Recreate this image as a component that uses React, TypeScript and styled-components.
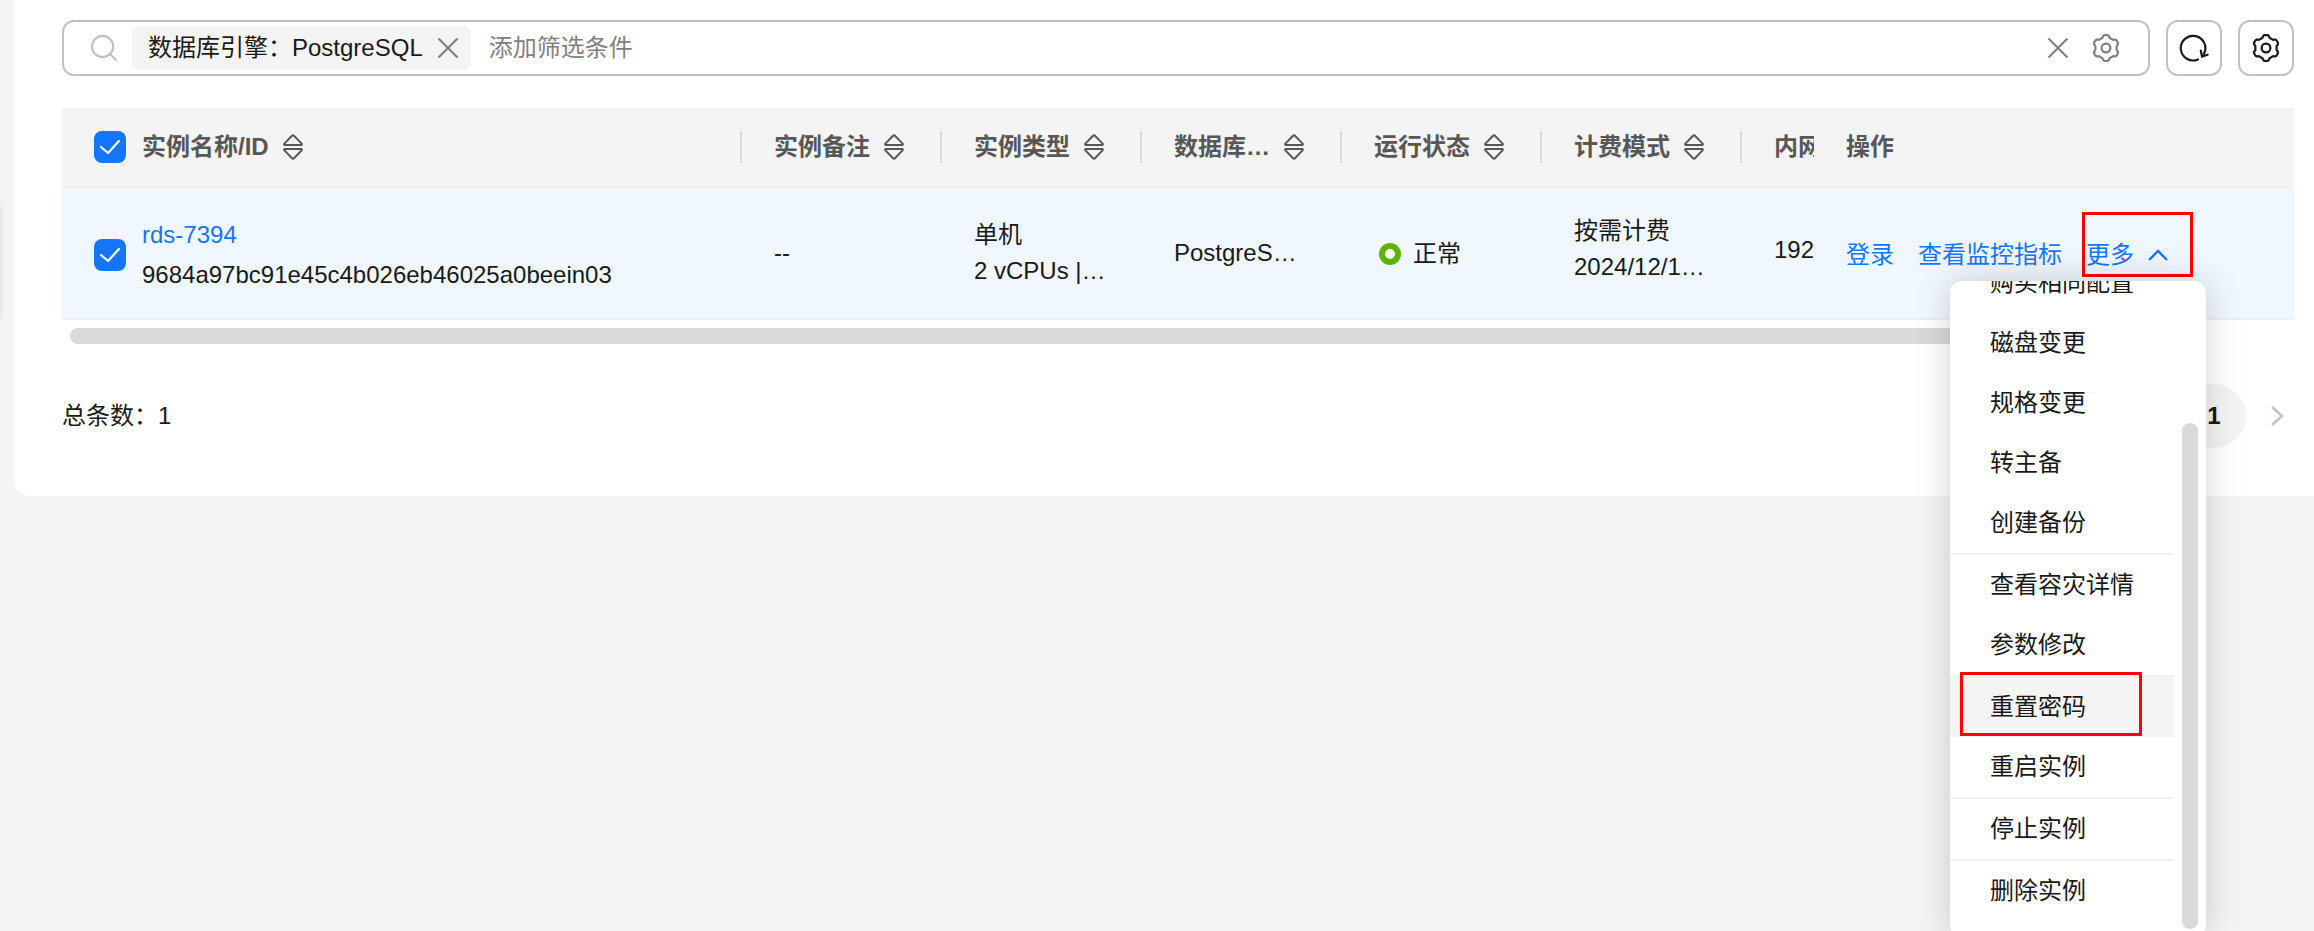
import React from "react";
import styled, { createGlobalStyle, css } from "styled-components";

const color = {
  page: "#f4f4f4",
  panel: "#ffffff",
  text: "#191919",
  heading: "#575757",
  muted: "#808080",
  line: "#c2c2c2",
  divider: "#dbdbdb",
  rowLine: "#f0f0f0",
  selected: "#f0f7ff",
  blue: "#1476ff",
  green: "#5cb300",
  mark: "#ff0000",
};

const GlobalStyle = createGlobalStyle`
  *, *::before, *::after { box-sizing: border-box; }
  body {
    margin: 0;
    background: ${color.page};
    color: ${color.text};
    font: 24px/36px "Liberation Sans", "Noto Sans CJK SC", sans-serif;
  }
  button, input { font: inherit; color: inherit; }
  button { padding: 0; border: 0; background: none; cursor: pointer; }
`;

const Page = styled.div`
  position: relative;
  min-height: 100vh;
  padding-left: 14px;
  overflow: hidden;
`;

const SideHandle = styled.div`
  position: absolute;
  top: 200px;
  left: -20px;
  width: 20px;
  height: 124px;
  border-radius: 0 12px 12px 0;
  box-shadow: 0 0 6px rgba(0, 0, 0, 0.14);
`;

const Panel = styled.main`
  padding: 20px 20px 48px 48px;
  background: ${color.panel};
  border-bottom-left-radius: 16px;
`;

const Toolbar = styled.div`
  display: flex;
  gap: 16px;
  height: 56px;
  margin-bottom: 32px;
`;

const outlined = css`
  border: 2px solid ${color.line};
  border-radius: 12px;
`;

const FilterBox = styled.div`
  ${outlined}
  flex: 1;
  display: flex;
  align-items: center;
  min-width: 0;
  padding: 0 28px 0 26px;
`;

const FilterTag = styled.span`
  display: flex;
  align-items: center;
  gap: 14px;
  height: 44px;
  margin: 0 18px 0 14px;
  padding: 0 12px 0 16px;
  border-radius: 8px;
  background: ${color.page};
  white-space: nowrap;
`;

const FilterInput = styled.input`
  flex: 1;
  min-width: 0;
  height: 40px;
  padding: 0;
  border: 0;
  outline: 0;
  background: none;
  &::placeholder { color: ${color.muted}; opacity: 1; }
`;

const IconButton = styled.button<{ $gap?: number }>`
  display: flex;
  margin-left: ${(p) => p.$gap ?? 0}px;
  color: ${color.muted};
`;

const SquareButton = styled.button`
  && { ${outlined} }
  display: flex;
  align-items: center;
  justify-content: center;
  width: 56px;
`;

const Table = styled.table`
  width: 100%;
  border-collapse: separate;
  border-spacing: 0;
  table-layout: fixed;
`;

const Col = styled.col<{ $width?: number }>`
  width: ${(p) => (p.$width ? `${p.$width}px` : "auto")};
`;

const HeadCell = styled.th<{ $divided?: boolean }>`
  height: 80px;
  padding: 0 0 0 32px;
  border-bottom: 2px solid ${color.rowLine};
  background: linear-gradient(${color.divider}, ${color.divider}) right center /
    ${(p) => (p.$divided ? "2px 32px" : "0 0")} no-repeat ${color.page};
  color: ${color.heading};
  text-align: left;
`;

const Cell = styled.td<{ $low?: boolean }>`
  height: 132px;
  padding: ${(p) => (p.$low ? 4 : 0)}px 0 0 32px;
  border-bottom: 2px solid ${color.rowLine};
  background: ${color.selected};
`;

const HeadLabel = styled.div`
  display: flex;
  align-items: center;
  gap: 14px;
  overflow: hidden;
  white-space: nowrap;
`;

const NameRow = styled.div`
  display: flex;
  align-items: center;
  gap: 16px;
`;

const Lines = styled.div<{ $line?: number; $lift?: number }>`
  display: flex;
  flex-direction: column;
  overflow: hidden;
  padding-bottom: ${(p) => p.$lift ?? 0}px;
  line-height: ${(p) => p.$line ?? 36}px;
  white-space: nowrap;
`;

const Status = styled.div`
  display: flex;
  align-items: center;
  gap: 12px;
  padding: 2px 0 0 5px;
`;

const StatusRing = styled.span`
  width: 22px;
  height: 22px;
  border: 6px solid ${color.green};
  border-radius: 50%;
  background: ${color.panel};
`;

const Link = styled.a`
  color: ${color.blue};
  text-decoration: none;
`;

const CheckLabel = styled.label`
  display: grid;
  flex: none;
  width: 32px;
  height: 32px;
  & > * { grid-area: 1 / 1; }
  svg { pointer-events: none; z-index: 1; }
`;

const CheckInput = styled.input`
  appearance: none;
  width: 32px;
  height: 32px;
  margin: 0;
  border-radius: 8px;
  background: ${color.blue};
`;

const Actions = styled.div`
  display: flex;
  gap: 24px;
  white-space: nowrap;
`;

const MoreWrap = styled.div`
  position: relative;
`;

const MoreButton = styled.button`
  && { color: ${color.blue}; }
  display: flex;
  align-items: center;
  gap: 14px;
  &::after {
    content: "";
    position: absolute;
    inset: -25px -25px -4px -4px;
    border: 3px solid ${color.mark};
  }
`;

const Menu = styled.div`
  position: absolute;
  z-index: 2;
  top: 44px;
  right: -38px;
  display: flex;
  gap: 8px;
  width: 256px;
  height: 656px;
  padding: 0 8px 8px 0;
  border-radius: 12px;
  background: ${color.panel};
  box-shadow: 0 0 36px rgba(0, 0, 0, 0.18);
`;

const MenuList = styled.ul`
  flex: 1;
  display: flex;
  flex-direction: column;
  justify-content: flex-end;
  margin: 0;
  padding: 0 0 8px;
  overflow: hidden;
  list-style: none;
`;

const MenuItem = styled.li<{ $split?: boolean; $active?: boolean }>`
  position: relative;
  flex: none;
  border-top: ${(p) => (p.$split ? `2px solid ${color.rowLine}` : "0")};
  background: ${(p) => (p.$active ? color.page : "transparent")};
  ${(p) =>
    p.$active &&
    css`
      &::after {
        content: "";
        position: absolute;
        inset: -5px 32px 1px 10px;
        border: 3px solid ${color.mark};
        pointer-events: none;
      }
    `}
`;

const MenuButton = styled.button`
  display: block;
  width: 100%;
  height: 60px;
  && { padding-left: 40px; }
  text-align: left;
`;

const MenuThumb = styled.div`
  align-self: flex-end;
  width: 16px;
  height: 506px;
  border-radius: 8px;
  background: #dadada;
`;

const ScrollTrack = styled.div`
  padding: 8px;
`;

const ScrollThumb = styled.div`
  width: 88%;
  height: 16px;
  border-radius: 8px;
  background: #dadada;
`;

const Footer = styled.footer`
  display: flex;
  align-items: center;
  justify-content: space-between;
  height: 64px;
  margin-top: 32px;
`;

const Pager = styled.nav`
  display: flex;
  align-items: center;
  gap: 25px;
  padding-right: 10px;
  color: ${color.line};
`;

const PageNumber = styled.button`
  width: 64px;
  height: 64px;
  && {
    border-radius: 50%;
    background: ${color.page};
    color: ${color.text};
    font-weight: 700;
  }
`;

const SearchIcon = () => (
  <svg width="28" height="28" viewBox="0 0 28 28" fill="none" stroke="#c2c2c2" strokeWidth="2.2">
    <circle cx="12.6" cy="12.400" r="10.600" />
    <path d="M20 20l6.500 6.500" />
  </svg>
);

const CloseIcon = () => (
  <svg width="22" height="22" viewBox="0 0 22 22" fill="none" stroke="currentColor" strokeWidth="2.2">
    <path d="M1.500 1.500l19 19M20.500 1.500l-19 19" />
  </svg>
);

// Outline of a six-lobed gear, sampled around its centre.
const gearPoints = Array.from({ length: 120 }, (_, i) => {
  const angle = (i / 120) * Math.PI * 2;
  const radius = 11.8 + 1.2 * Math.tanh(2.4 * Math.cos(6 * (angle - Math.PI / 2)));
  return `${(14 + radius * Math.cos(angle)).toFixed(2)},${(14 + radius * Math.sin(angle)).toFixed(2)}`;
}).join(" ");

const GearIcon = () => (
  <svg width="28" height="28" viewBox="0 0 28 28" fill="none" stroke="currentColor" strokeWidth="2.2" strokeLinejoin="round">
    <polygon points={gearPoints} />
    <circle cx="14" cy="14" r="4.400" />
  </svg>
);

const RefreshIcon = () => (
  <svg width="30" height="28" viewBox="0 0 30 28" fill="none" stroke="currentColor" strokeWidth="2.2" strokeLinecap="round">
    <path d="M19 25.400A12.300 12.300 0 1 1 24.600 20.500" />
    <path d="M21.800 16.500l1.200 6 5.600-1.800" />
  </svg>
);

const SortIcon = () => (
  <svg width="20" height="26" viewBox="0 0 20 26" fill="none" stroke="currentColor" strokeWidth="2" strokeLinejoin="round">
    <path d="M9 1.800q1-1 2 0l7.600 7.800q.8 1.400-.6 1.400H2q-1.400 0-.6-1.400zM9 24.200q1 1 2 0l7.600-7.800q.8-1.400-.6-1.400H2q-1.400 0-.6 1.400z" />
  </svg>
);

const CheckIcon = () => (
  <svg width="32" height="32" viewBox="0 0 32 32" fill="none" stroke="#fff" strokeWidth="2.2" strokeLinecap="round" strokeLinejoin="round">
    <path d="M7 16l7 6L25 10" />
  </svg>
);

const UpIcon = () => (
  <svg width="20" height="12" viewBox="0 0 20 12" fill="none" stroke="currentColor" strokeWidth="2.4">
    <path d="M1 11l9-9 9 9" />
  </svg>
);

const ArrowIcon = ({ back }: { back?: boolean }) => (
  <svg width="13" height="20" viewBox="0 0 13 20" fill="none" stroke="currentColor" strokeWidth="2.4">
    <path d={back ? "M12 1L2 10l10 9" : "M1 1l10 9-10 9"} />
  </svg>
);

const Check = ({ label }: { label: string }) => (
  <CheckLabel>
    <CheckInput type="checkbox" defaultChecked aria-label={label} />
    <CheckIcon />
  </CheckLabel>
);

const sortable = ["实例备注", "实例类型", "数据库…", "运行状态", "计费模式"];

const menu = [
  { label: "购买相同配置" },
  { label: "磁盘变更" },
  { label: "规格变更" },
  { label: "转主备" },
  { label: "创建备份" },
  { label: "查看容灾详情", split: true },
  { label: "参数修改" },
  { label: "重置密码", split: true, active: true },
  { label: "重启实例" },
  { label: "停止实例", split: true },
  { label: "删除实例", split: true },
];

export default function App() {
  return (
    <Page>
      <GlobalStyle />
      <SideHandle />
      <Panel>
        <Toolbar>
          <FilterBox>
            <SearchIcon />
            <FilterTag>
              数据库引擎：PostgreSQL
              <IconButton aria-label="移除"><CloseIcon /></IconButton>
            </FilterTag>
            <FilterInput placeholder="添加筛选条件" aria-label="添加筛选条件" />
            <IconButton aria-label="清空"><CloseIcon /></IconButton>
            <IconButton $gap={23} aria-label="筛选设置"><GearIcon /></IconButton>
          </FilterBox>
          <SquareButton aria-label="刷新"><RefreshIcon /></SquareButton>
          <SquareButton aria-label="设置"><GearIcon /></SquareButton>
        </Toolbar>

        <Table>
          <colgroup>
            <Col />
            {sortable.map((name) => <Col key={name} $width={200} />)}
            <Col $width={72} />
            <Col $width={480} />
          </colgroup>
          <thead>
            <tr>
              <HeadCell $divided>
                <NameRow>
                  <Check label="全选" />
                  <HeadLabel>实例名称/ID<SortIcon /></HeadLabel>
                </NameRow>
              </HeadCell>
              {sortable.map((name) => (
                <HeadCell key={name} $divided>
                  <HeadLabel>{name}<SortIcon /></HeadLabel>
                </HeadCell>
              ))}
              <HeadCell><HeadLabel>内网</HeadLabel></HeadCell>
              <HeadCell>操作</HeadCell>
            </tr>
          </thead>
          <tbody>
            <tr>
              <Cell $low>
                <NameRow>
                  <Check label="选择 rds-7394" />
                  <Lines $line={40}>
                    <Link href="#rds-7394">rds-7394</Link>
                    <span>9684a97bc91e45c4b026eb46025a0beein03</span>
                  </Lines>
                </NameRow>
              </Cell>
              <Cell>--</Cell>
              <Cell>
                <Lines><span>单机</span><span>2 vCPUs |…</span></Lines>
              </Cell>
              <Cell>PostgreS…</Cell>
              <Cell><Status><StatusRing />正常</Status></Cell>
              <Cell>
                <Lines $lift={8}><span>按需计费</span><span>2024/12/1…</span></Lines>
              </Cell>
              <Cell><Lines $lift={6}>192</Lines></Cell>
              <Cell $low>
                <Actions>
                  <Link href="#login">登录</Link>
                  <Link href="#metrics">查看监控指标</Link>
                  <MoreWrap>
                    <MoreButton aria-expanded="true">更多<UpIcon /></MoreButton>
                    <Menu>
                      <MenuList>
                        {menu.map((item) => (
                          <MenuItem key={item.label} $split={item.split} $active={item.active}>
                            <MenuButton>{item.label}</MenuButton>
                          </MenuItem>
                        ))}
                      </MenuList>
                      <MenuThumb />
                    </Menu>
                  </MoreWrap>
                </Actions>
              </Cell>
            </tr>
          </tbody>
        </Table>
        <ScrollTrack><ScrollThumb /></ScrollTrack>

        <Footer>
          <span>总条数：1</span>
          <Pager>
            <ArrowIcon back />
            <PageNumber>1</PageNumber>
            <ArrowIcon />
          </Pager>
        </Footer>
      </Panel>
    </Page>
  );
}
